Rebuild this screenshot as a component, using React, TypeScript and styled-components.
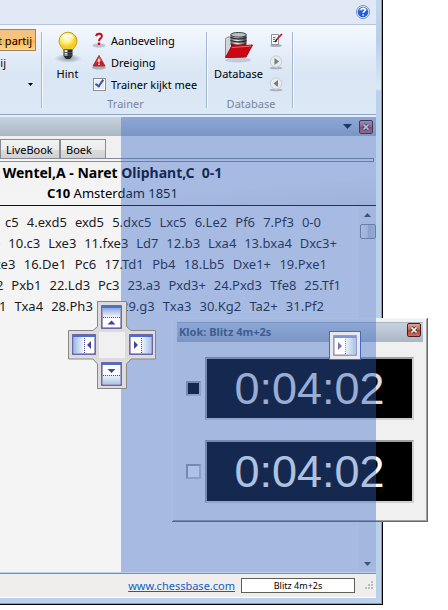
import React from "react";
import styled, { createGlobalStyle, css } from "styled-components";

const GlobalStyle = createGlobalStyle`
  *, *::before, *::after { box-sizing: border-box; }
  body {
    margin: 0;
    background: #fff;
    color: #000;
    font-family: "Noto Sans", "Open Sans", sans-serif;
    font-size: 11px;
  }
  button {
    font: inherit;
    color: inherit;
    padding: 0;
    border: 0;
    background: none;
  }
  svg { display: block; flex: none; }
`;

const Desktop = styled.div`
  display: flex;
  min-height: 100vh;
  padding: 0 65px 5px 0;
  overflow: hidden;
`;

const Window = styled.main`
  flex: 1;
  min-width: 0;
  display: flex;
  flex-direction: column;
  padding: 0 6px 6px 0;
  border: solid #000;
  border-width: 0 1px 1px 0;
  background: linear-gradient(#c3d7ec 0, #b7cfe9 40px, #dce8f5 89px, #b9d1ea 91px);
  box-shadow: inset -1px -1px 0 #38bfe0;
`;

const TopBar = styled.header`
  display: flex;
  justify-content: flex-end;
  align-items: center;
  height: 24px;
  padding-right: 6px;
  background: #dfe8f4;
`;

const Ribbon = styled.nav`
  display: flex;
  height: 93px;
  padding-top: 4px;
  border-top: 1px solid #b5c6dc;
  background: linear-gradient(#f5f9fe 0, #e6effa 24px, #dae6f4 50px, #dde8f6 89px, #8fa6c2 89px, #8fa6c2 90px, #e4edf6 90px);
`;

const Group = styled.section<{ $width: number }>`
  width: ${(p) => p.$width}px;
  flex: none;
  display: flex;
  flex-direction: column;
  position: relative;

  &::after {
    content: "";
    position: absolute;
    right: 0;
    top: 3px;
    height: 76px;
    width: 2px;
    background: #a6b9d2;
    border-right: 1px solid #f3f8fd;
  }
`;

const GroupBody = styled.div`
  display: flex;
  height: 67px;
`;

const GroupLabel = styled.h2`
  margin: 0;
  font-size: 11px;
  font-weight: 400;
  line-height: 16px;
  text-align: center;
  color: #77859c;
`;

const ClippedColumn = styled.div`
  display: flex;
  flex-direction: column;
  width: 36px;
  overflow: hidden;
`;

const ClippedItem = styled.button<{ $active?: boolean; $end: number }>`
  display: flex;
  align-items: center;
  justify-content: flex-end;
  height: 22px;
  flex: none;
  padding-right: ${(p) => p.$end}px;
  white-space: nowrap;
  ${(p) =>
    p.$active &&
    css`
      border: 1px solid #a08458;
      border-left: 0;
      background: linear-gradient(#f0c088, #fbc477 45%, #ffb052 55%, #ffd986);
    `}
`;

const LargeButton = styled.button<{ $width: number }>`
  display: flex;
  flex-direction: column;
  align-items: center;
  width: ${(p) => p.$width}px;
  padding-top: 2px;
  line-height: 16px;
  svg { margin-bottom: 3px; }
`;

const SmallColumn = styled.div`
  display: flex;
  flex-direction: column;
`;

const smallItem = css`
  display: flex;
  align-items: center;
  gap: 5px;
  height: 22px;
  white-space: nowrap;
`;
const SmallButton = styled.button`${smallItem}`;
const CheckLabel = styled.label`${smallItem}
  padding-left: 1px;
`;

const TrainerCheck = styled.input`
  appearance: none;
  width: 13px;
  height: 13px;
  margin: 0;
  border: 1px solid #8e8f8f;
  background: #e6ebf3;
  box-shadow: inset 0 0 0 1px #fff;
  display: grid;
  place-items: center;
  &:checked::after {
    content: "";
    width: 5px;
    height: 9px;
    margin-top: -3px;
    border: solid #3d55a0;
    border-width: 0 2px 2px 0;
    transform: rotate(35deg);
  }
`;

const Workspace = styled.section`
  position: relative;
  flex: 1;
  display: flex;
  flex-direction: column;
  margin-bottom: 1px;
  background: #f4f4f4;
`;

const PaneTitle = styled.div`
  display: flex;
  align-items: center;
  justify-content: flex-end;
  gap: 7px;
  height: 19px;
  padding-right: 3px;
  background: linear-gradient(#c8d3df, #a9b6c3);
`;

const CloseButton = styled.button`
  display: grid;
  place-items: center;
  width: 14px;
  height: 14px;
  border: 1px solid #4b1a22;
  border-radius: 2px;
  background: linear-gradient(#e3a498, #cf6a58 45%, #b93a2a 50%, #d07058);
`;

const Tabs = styled.div`
  display: flex;
  height: 26px;
  padding-top: 3px;
  border-bottom: 3px solid #f4f4f4;
  background: #f0f0f0;
`;

const Tab = styled.button<{ $width: number }>`
  width: ${(p) => p.$width}px;
  height: 20px;
  padding: 0 5px;
  text-align: left;
  border: 1px solid #898c95;
  border-bottom: 0;
  background: linear-gradient(#f3f3f3, #ebebeb 50%, #dcdcdc 51%, #cfcfcf);
`;

const TabRule = styled.div`
  height: 4px;
  margin: -4px 2px 0 0;
  border: 1px solid #898c95;
  border-left: 0;
`;

const GameHeader = styled.header`
  display: flex;
  flex-direction: column;
  align-items: center;
  height: 44px;
  padding-right: 151px;
  background: linear-gradient(175deg, #f2f2f2, #f4f4f4 60%, #e6e6e6);
  border-bottom: 1px solid #00008b;
  font-size: 13px;
  line-height: 21px;
  white-space: pre;
`;

const Players = styled.h1`
  margin: 0;
  font-size: 14px;
  line-height: 21px;
`;

const Notation = styled.div`
  flex: 1;
  display: flex;
  min-height: 365px;
`;

const Moves = styled.div`
  flex: 1;
  min-width: 0;
  overflow: hidden;
  padding-top: 6px;
  font-size: 13px;
  line-height: 21px;
  color: #1c1c1c;
`;

const MoveRow = styled.div<{ $start: number; $end: number }>`
  display: flex;
  justify-content: space-between;
  margin-left: ${(p) => p.$start}px;
  margin-right: ${(p) => p.$end}px;
  white-space: nowrap;
`;

const Move = styled.span`
  &:empty { width: 12px; }
`;

const ScrollTrack = styled.div`
  display: flex;
  flex-direction: column;
  align-items: center;
  width: 17px;
  padding: 7px 0 6px;
  background: #efefef;
`;

const Thumb = styled.div`
  width: 16px;
  height: 15px;
  margin: 7px 0 auto;
  border: 1px solid #8b8f96;
  border-radius: 2px;
  background: linear-gradient(90deg, #f4f4f4, #e4e4e4 45%, #c4c8ce 55%, #d4d7dc);
`;

const StatusBar = styled.footer`
  display: flex;
  align-items: center;
  justify-content: flex-end;
  gap: 6px;
  height: 25px;
  padding-right: 3px;
  border-top: 1px solid #8d8d8d;
  border-bottom: 1px solid #fff;
  background: #f0eded;
`;

const SiteLink = styled.a`
  font-size: 11px;
  color: #0b62c4;
`;

const ModeBox = styled.div`
  width: 114px;
  height: 15px;
  margin-right: 4px;
  border: 1px solid #5a6058;
  background: #fff;
  font-size: 9px;
  line-height: 13px;
  text-align: center;
`;

const ClockDialog = styled.section`
  position: absolute;
  left: 172px;
  top: 201px;
  width: 256px;
  padding: 4px 4px 18px 5px;
  border: solid #696969;
  border-width: 0 1px 1px 0;
  background: #f0f0f0;
  box-shadow: inset 1px 1px 0 #f8f8f8, inset -1px -1px 0 #a0a0a0;
`;

const ClockTitle = styled.div`
  display: flex;
  align-items: flex-start;
  justify-content: space-between;
  height: 20px;
  padding: 0 2px;
  border-top: 1px solid #a8b4c0;
  background: linear-gradient(#c8d3df, #a9b6c3);
  font-size: 11px;
  font-weight: 700;
  line-height: 18px;
  color: #47586a;
`;

const Clocks = styled.div`
  display: flex;
  flex-direction: column;
  gap: 20px;
  padding: 15px 9px 0;
`;

const ClockRow = styled.div`
  display: flex;
  align-items: center;
  gap: 4px;
`;

const TurnCheck = styled.input`
  appearance: none;
  flex: none;
  width: 15px;
  height: 15px;
  margin: 0;
  border: 2px solid #a0a0a0;
  border-right-color: #c8c8c8;
  border-bottom-color: #c8c8c8;
  background: #fff;
  &:checked { background: #000; }
`;

const ClockFace = styled.output<{ $color: string }>`
  flex: 1;
  height: 63px;
  border: 2px solid #a0a0a0;
  border-right-color: #d0d0d0;
  border-bottom-color: #d0d0d0;
  background: #000;
  color: ${(p) => p.$color};
  font-family: "Liberation Sans", Arial, sans-serif;
  font-size: 45px;
  line-height: 59px;
  text-align: center;
`;

const DropPreview = styled.div`
  position: absolute;
  inset: 0 0 0 121px;
  background: rgba(53, 102, 200, 0.4);
`;

const DockCompass = styled.div`
  position: absolute;
  left: 68px;
  top: 184px;
`;

const DockEdge = styled.div`
  position: absolute;
  left: 329px;
  top: 214px;
  padding: 3px;
  border: 1px solid #3d6cc8;
  background: #e6e8ec;
`;

function HelpIcon() {
  return (
    <svg width="14" height="14" viewBox="0 0 14 14">
      <circle cx="7" cy="7" r="6.5" fill="#f2f6fd" stroke="#6d8fc9" />
      <circle cx="7" cy="7" r="5.3" fill="#255fd3" />
      <path d="M2.6 6a4.6 4.6 0 0 1 8.8 0Q7 4 2.6 6" fill="#6f9ff0" />
      <path d="M5 5.3q.2-2 2.2-2 2 .1 2 1.7c0 1.3-2 1.5-2 3M7.1 9.3v1.5" fill="none" stroke="#fff" strokeWidth="1.5" />
    </svg>
  );
}

function BulbIcon() {
  return (
    <svg width="30" height="32" viewBox="0 0 30 32">
      <defs>
        <radialGradient id="bulb" cx="42%" cy="35%">
          <stop offset="0" stopColor="#fffde0" />
          <stop offset=".55" stopColor="#fff08a" />
          <stop offset="1" stopColor="#f5cd1d" />
        </radialGradient>
        <radialGradient id="shade">
          <stop offset="0" stopColor="#68717d" stopOpacity=".7" />
          <stop offset="1" stopColor="#68717d" stopOpacity="0" />
        </radialGradient>
      </defs>
      <ellipse cx="15" cy="27.500" rx="14" ry="4.500" fill="url(#shade)" />
      <path d="M15 1.200a9 9 0 0 0-9 9c0 4 2.600 5.300 4.200 8.300h9.600c1.600-3 4.200-4.300 4.200-8.300a9 9 0 0 0-9-9z" fill="url(#bulb)" stroke="#c79f22" />
      <path d="M8.500 8Q10 3 15 3t6 4.500Q15 4.500 8.500 8" fill="#fff" opacity=".75" />
      <path d="M10.500 18.500h9V25l-2.500 3h-4l-2.500-3z" fill="#26292d" />
      <path d="M11.500 19h3v6h-3z" fill="#dfe4e8" />
      <path d="M11 21.500h8M11 24h8" stroke="#50565e" />
    </svg>
  );
}

function QuestionIcon() {
  return (
    <svg width="14" height="16" viewBox="0 0 14 16">
      <ellipse cx="7" cy="13.500" rx="6.500" ry="2" fill="#939cac" opacity=".55" />
      <path d="M4.200 4.200Q4.500 1.500 7.400 1.700q2.700.2 2.400 2.700C9.500 6.500 7.100 6.600 7 9" fill="none" stroke="#c40b16" strokeWidth="2" />
      <path d="M5.800 10.500h2.400v2.500H5.800z" fill="#c40b16" />
    </svg>
  );
}

function WarningIcon() {
  return (
    <svg width="14" height="16" viewBox="0 0 14 16">
      <ellipse cx="7" cy="13.500" rx="7" ry="2" fill="#8d95a5" opacity=".7" />
      <path d="M7 1.500 13 12H1z" fill="#cf1a20" stroke="#a5303a" strokeLinejoin="round" />
      <path d="M7 2.500 9.500 7Q6 7 4 9z" fill="#e9666a" />
      <path d="M7 5v3.500M7 9.500V11" stroke="#fff" strokeWidth="1.400" />
    </svg>
  );
}

function DatabaseIcon() {
  return (
    <svg width="32" height="32" viewBox="0 0 32 32">
      <defs>
        <linearGradient id="disk">
          <stop offset="0" stopColor="#555b61" />
          <stop offset=".4" stopColor="#f3f3f3" />
          <stop offset="1" stopColor="#2e3338" />
        </linearGradient>
      </defs>
      <ellipse cx="15" cy="29" rx="13" ry="2.500" fill="#aab4c4" opacity=".6" />
      <path d="M2.500 26V7.500L5 6h4l1.500 2H18v18z" fill="#d2d4d6" stroke="#8e9296" />
      <path d="M7.500 4v10h16V4z" fill="url(#disk)" />
      <path d="M7.500 6.500q8 3 16 0M7.500 9.500q8 3 16 0" fill="none" stroke="#282c30" strokeWidth="1.300" />
      <ellipse cx="15.500" cy="3.800" rx="7.800" ry="2.300" fill="#bcc0c4" stroke="#3b4045" />
      <path d="M8 12q7 3 15 0v4H8z" fill="#a30b14" />
      <path d="M8.500 15.500 29.500 14l-6.500 12-20.500.5z" fill="#cb0713" stroke="#a30812" />
      <path d="M9 16.500 28 15" stroke="#ef6d70" />
    </svg>
  );
}

function EditIcon() {
  return (
    <svg width="14" height="16" viewBox="0 0 14 16">
      <ellipse cx="7" cy="13.600" rx="6" ry="1.500" fill="#8b95a5" opacity=".7" />
      <path d="M2.500 2.500h7v10h-7z" fill="#fafafa" stroke="#8f9399" />
      <path d="M4 5.500h2.500M4 7.500h2M4 9.500h4" stroke="#777" />
      <path d="M13 2 8.500 6.500" stroke="#cd1622" strokeWidth="1.700" />
      <path d="M8.500 6.500 6 10" stroke="#222" strokeWidth="1.300" />
    </svg>
  );
}

function ArrowDisc({ back = false }: { back?: boolean }) {
  return (
    <svg width="14" height="16" viewBox="0 0 14 16">
      <ellipse cx="7" cy="14" rx="6.500" ry="1.300" fill="#929cab" opacity=".7" />
      <circle cx="7" cy="7.500" r="5.700" fill="#e9eaeb" stroke="#c8cdd4" />
      <path d={back ? "M9 4v7L4.500 7.500z" : "M5.500 4v7L10 7.500z"} fill="#767a80" />
    </svg>
  );
}

function Triangle({ up = false, wide = false }: { up?: boolean; wide?: boolean }) {
  const w = wide ? 9 : 7;
  return (
    <svg width={w} height={wide ? 5 : 4} viewBox="0 0 10 5" preserveAspectRatio="none">
      <path d={up ? "M0 5h10L5 0z" : "M0 0h10L5 5z"} fill={wide ? "#101820" : "#3f4650"} />
    </svg>
  );
}

function CrossIcon() {
  return (
    <svg width="8" height="8" viewBox="0 0 8 8">
      <path d="m1.500 1.500 5 5m0-5-5 5" stroke="#44414b" strokeWidth="3.200" />
      <path d="m1.500 1.500 5 5m0-5-5 5" stroke="#fff" strokeWidth="1.700" />
    </svg>
  );
}

type Side = "left" | "up" | "right" | "down";

function DockGlyph({ x = 0, y = 0, side, muted = false }: { x?: number; y?: number; side: Side; muted?: boolean }) {
  const vertical = side === "up" || side === "down";
  const w = vertical ? 21 : 24;
  const h = vertical ? 24 : 21;
  const line = muted ? "#8880b8" : "#4f419c";
  const arrow = muted ? "#7772bd" : "#3c43a8";
  return (
    <g transform={`translate(${x} ${y})`}>
      <rect x="1" y="1" width={w - 2} height={h - 2} fill="#fff" stroke={line} />
      {side === "left" && <path d="M2 3h9v16H2z" fill="url(#paneL)" />}
      {side === "right" && <path d="M13 3h9v16h-9z" fill="url(#paneR)" />}
      {side === "up" && <path d="M2 3h17v9H2z" fill="url(#paneU)" />}
      {side === "down" && <path d="M2 13h17v9H2z" fill="url(#paneD)" />}
      <path d={`M1 2h${w - 2}`} stroke={muted ? "#7c98d8" : "#4a6fd0"} strokeWidth="2" />
      {(side === "left" || side === "right") && <path d="M12.500 4v15" stroke={line} strokeDasharray="1 1" />}
      {side === "up" && <path d="M2 12.500h17" stroke={line} strokeDasharray="1 1" />}
      {side === "down" && <path d="M2 13.500h17" stroke={line} strokeDasharray="1 1" />}
      {side === "left" && <path d="M19 7v8l-4-4z" fill={arrow} />}
      {side === "right" && <path d="M5 7v8l4-4z" fill={arrow} />}
      {side === "up" && <path d="M6.500 19.500h8l-4-4z" fill={arrow} />}
      {side === "down" && <path d="M6.500 7h8l-4 4z" fill={arrow} />}
      <rect x=".500" y=".500" width={w - 1} height={h - 1} fill="none" stroke={line} opacity=".55" />
    </g>
  );
}

function PaneGradients() {
  return (
    <defs>
      <linearGradient id="paneL"><stop stopColor="#9fbfe2" /><stop offset="1" stopColor="#eaf2fb" /></linearGradient>
      <linearGradient id="paneR"><stop stopColor="#eaf2fb" /><stop offset="1" stopColor="#a9c6e4" /></linearGradient>
      <linearGradient id="paneU" x2="0" y2="1"><stop stopColor="#8eabdc" /><stop offset="1" stopColor="#f0f6fd" /></linearGradient>
      <linearGradient id="paneD" x2="0" y2="1"><stop stopColor="#eef5fc" /><stop offset="1" stopColor="#a9c9e5" /></linearGradient>
    </defs>
  );
}

function CompassDrawing() {
  return (
    <svg width="88" height="88" viewBox="0 0 88 88" role="img" aria-label="Dock">
      <PaneGradients />
      <path
        d="M29.500.500h29v25l4.500 4h24.500v28.500H63l-4.500 5v24.500h-29V63L25 58H.500V29.500H25l4.500-4z"
        fill="#dcdcdc"
        stroke="#878787"
      />
      <path d="M31 31h26v26H31z" fill="#f0f0f0" />
      <DockGlyph x={33} y={4} side="up" />
      <DockGlyph x={4} y={33} side="left" />
      <DockGlyph x={61} y={33} side="right" />
      <DockGlyph x={33} y={61} side="down" />
    </svg>
  );
}

function ResizeGrip() {
  return (
    <svg width="8" height="9" viewBox="0 0 8 9">
      <path d="M6 0h2v2H6zM3 3h2v2H3zM6 3h2v2H6zM0 6h2v2H0zM3 6h2v2H3zM6 6h2v2H6z" fill="#bdbaba" />
    </svg>
  );
}

const notation = [
  { start: 5, end: 38, moves: ["c5", "4.exd5", "exd5", "5.dxc5", "Lxc5", "6.Le2", "Pf6", "7.Pf3", "0-0"] },
  { start: -7, end: 22, moves: ["+", "10.c3", "Lxe3", "11.fxe3", "Ld7", "12.b3", "Lxa4", "13.bxa4", "Dxc3+"] },
  { start: -6, end: 32, moves: ["xe3", "16.De1", "Pc6", "17.Td1", "Pb4", "18.Lb5", "Dxe1+", "19.Pxe1"] },
  { start: -4, end: 18, moves: ["2", "Pxb1", "22.Ld3", "Pc3", "23.a3", "Pxd3+", "24.Pxd3", "Tfe8", "25.Tf1"] },
  { start: -1, end: 35, moves: ["1", "Txa4", "28.Ph3", "", "29.g3", "Txa3", "30.Kg2", "Ta2+", "31.Pf2"] },
];

export default function App() {
  return (
    <Desktop>
      <GlobalStyle />
      <Window>
        <TopBar>
          <button aria-label="Help"><HelpIcon /></button>
        </TopBar>
        <Ribbon>
          <Group $width={43}>
            <ClippedColumn>
              <ClippedItem $active $end={3}>t partij</ClippedItem>
              <ClippedItem $end={30}>ij</ClippedItem>
              <ClippedItem $end={3} aria-label="Meer">
                <svg width="5" height="3" viewBox="0 0 5 3"><path d="M0 0h5L2.500 3z" /></svg>
              </ClippedItem>
            </ClippedColumn>
          </Group>
          <Group $width={165}>
            <GroupBody>
              <LargeButton $width={49}><BulbIcon />Hint</LargeButton>
              <SmallColumn>
                <SmallButton><QuestionIcon />Aanbeveling</SmallButton>
                <SmallButton><WarningIcon />Dreiging</SmallButton>
                <CheckLabel>
                  <TrainerCheck type="checkbox" defaultChecked />
                  Trainer kijkt mee
                </CheckLabel>
              </SmallColumn>
            </GroupBody>
            <GroupLabel>Trainer</GroupLabel>
          </Group>
          <Group $width={86}>
            <GroupBody>
              <LargeButton $width={61}><DatabaseIcon />Database</LargeButton>
              <SmallColumn>
                <SmallButton aria-label="Bewerken"><EditIcon /></SmallButton>
                <SmallButton aria-label="Volgende"><ArrowDisc /></SmallButton>
                <SmallButton aria-label="Vorige"><ArrowDisc back /></SmallButton>
              </SmallColumn>
            </GroupBody>
            <GroupLabel>Database</GroupLabel>
          </Group>
        </Ribbon>

        <Workspace>
          <PaneTitle>
            <button aria-label="Menu"><Triangle wide /></button>
            <CloseButton aria-label="Sluiten"><CrossIcon /></CloseButton>
          </PaneTitle>
          <Tabs>
            <Tab $width={60}>LiveBook</Tab>
            <Tab $width={46}>Boek</Tab>
          </Tabs>
          <TabRule />
          <GameHeader>
            <Players>{"Wentel,A - Naret Oliphant,C  0-1"}</Players>
            <div><b>C10</b> Amsterdam 1851</div>
          </GameHeader>
          <Notation>
            <Moves>
              {notation.map((row) => (
                <MoveRow key={row.moves[1]} $start={row.start} $end={row.end}>
                  {row.moves.map((move) => <Move key={move}>{move}</Move>)}
                </MoveRow>
              ))}
            </Moves>
            <ScrollTrack>
              <Triangle up />
              <Thumb />
              <Triangle />
            </ScrollTrack>
          </Notation>

          <ClockDialog aria-label="Klok">
            <ClockTitle>
              Klok: Blitz 4m+2s
              <CloseButton aria-label="Klok sluiten"><CrossIcon /></CloseButton>
            </ClockTitle>
            <Clocks>
              <ClockRow>
                <TurnCheck type="checkbox" defaultChecked aria-label="Klok 1" />
                <ClockFace $color="#dcdcdc">0:04:02</ClockFace>
              </ClockRow>
              <ClockRow>
                <TurnCheck type="checkbox" aria-label="Klok 2" />
                <ClockFace $color="#fffff0">0:04:02</ClockFace>
              </ClockRow>
            </Clocks>
          </ClockDialog>
          <DropPreview />
          <DockCompass><CompassDrawing /></DockCompass>
          <DockEdge>
            <svg width="24" height="21" viewBox="0 0 24 21"><DockGlyph side="right" muted /></svg>
          </DockEdge>
        </Workspace>

        <StatusBar>
          <SiteLink href="#chessbase">www.chessbase.com</SiteLink>
          <ModeBox>Blitz 4m+2s</ModeBox>
          <ResizeGrip />
        </StatusBar>
      </Window>
    </Desktop>
  );
}
